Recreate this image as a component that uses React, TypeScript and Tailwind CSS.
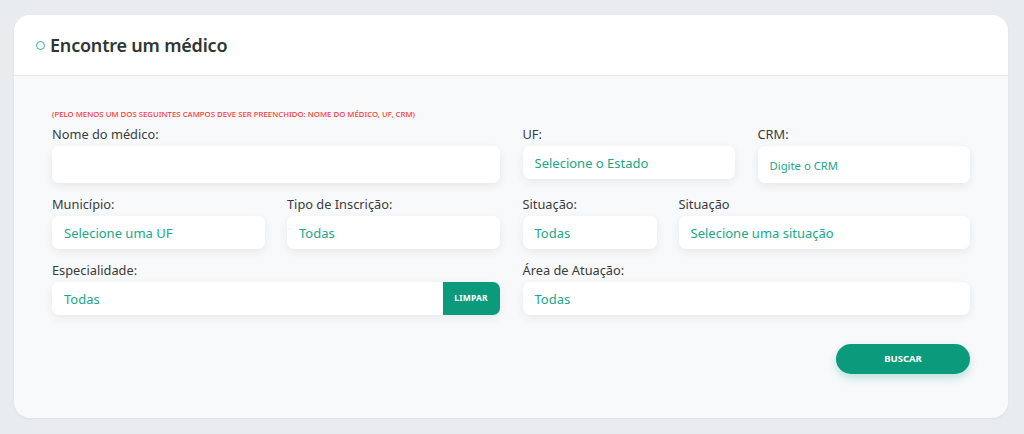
import React from "react";

const FONT = { fontFamily: '"Noto Sans", "Open Sans", Arial, sans-serif' };

function Label({ children }: { children: React.ReactNode }) {
  return (
    <div className="h-[18px] text-[12.8px] leading-[18px] text-[#3b3b3b] mb-[3px]">
      {children}
    </div>
  );
}

function Box({
  text,
  h = "h-[33px]",
  small = false,
}: {
  text?: string;
  h?: string;
  small?: boolean;
}) {
  return (
    <div
      className={`${h} bg-white rounded-[7px] shadow-[0_3px_10px_rgba(0,0,0,0.07)]
                  flex items-center px-3 pt-[3px] text-[#1aa68a] ${small ? "text-[11.3px]" : "text-[13px]"}`}
    >
      {text}
    </div>
  );
}

export default function App() {
  return (
    <div className="w-[1024px] h-[434px] bg-[#e9ecef] pt-[15px] px-[14px]" style={FONT}>
      <div className="w-[994px] h-[403px] rounded-[16px] bg-[#f8f9fb] overflow-hidden shadow-[0_1px_3px_rgba(0,0,0,0.05)]">
        {/* Header */}
        <div className="h-[61px] bg-white border-b border-[#e3e6ea] flex items-center pl-[22px] pt-[0px]">
          <span className="w-[9px] h-[9px] rounded-full border-[1.5px] border-[#2fb89a] mr-[5px] mt-[1px]" />
          <h1 className="text-[18px] font-semibold text-[#2e3633] tracking-[-0.2px]">
            Encontre um médico
          </h1>
        </div>

        {/* Body */}
        <div className="px-[38px] pt-[33px]">
          <p className="text-[7.8px] leading-[10px] font-medium text-[#ff3a3a] uppercase">
            (Pelo menos um dos seguintes campos deve ser preenchido: nome do médico, UF, CRM)
          </p>

          <div className="grid grid-cols-2 gap-x-[23px] mt-[6px]">
            {/* row 1 */}
            <div>
              <Label>Nome do médico:</Label>
              <Box h="h-[37px]" />
            </div>
            <div className="flex gap-[23px] items-start">
              <div className="w-[212px]">
                <Label>UF:</Label>
                <Box text="Selecione o Estado" />
              </div>
              <div className="flex-1">
                <Label>CRM:</Label>
                <Box text="Digite o CRM" h="h-[37px]" small />
              </div>
            </div>

            {/* row 2 */}
            <div className="flex gap-[22px] mt-[12px]">
              <div className="w-[213px]">
                <Label>Município:</Label>
                <Box text="Selecione uma UF" />
              </div>
              <div className="flex-1">
                <Label>Tipo de Inscrição:</Label>
                <Box text="Todas" />
              </div>
            </div>
            <div className="flex gap-[22px] mt-[12px]">
              <div className="w-[134px]">
                <Label>Situação:</Label>
                <Box text="Todas" />
              </div>
              <div className="flex-1">
                <Label>Situação</Label>
                <Box text="Selecione uma situação" />
              </div>
            </div>

            {/* row 3 */}
            <div className="mt-[12px]">
              <Label>Especialidade:</Label>
              <div className="h-[33px] bg-white rounded-[7px] shadow-[0_3px_10px_rgba(0,0,0,0.07)] flex items-center">
                <span className="flex-1 pl-3 pt-[3px] text-[13px] text-[#1aa68a]">Todas</span>
                <button className="h-full w-[57px] bg-[#0b9b7c] rounded-r-[7px] text-white text-[8.5px] font-bold tracking-[0.2px]">
                  LIMPAR
                </button>
              </div>
            </div>
            <div className="mt-[12px]">
              <Label>Área de Atuação:</Label>
              <Box text="Todas" />
            </div>
          </div>

          <div className="flex justify-end mt-[29px]">
            <button className="w-[134px] h-[30px] rounded-full bg-[#0b9b7c] text-white text-[9.5px] font-bold shadow-[0_4px_8px_rgba(11,155,124,0.25)]">
              BUSCAR
            </button>
          </div>
        </div>
      </div>
    </div>
  );
}
